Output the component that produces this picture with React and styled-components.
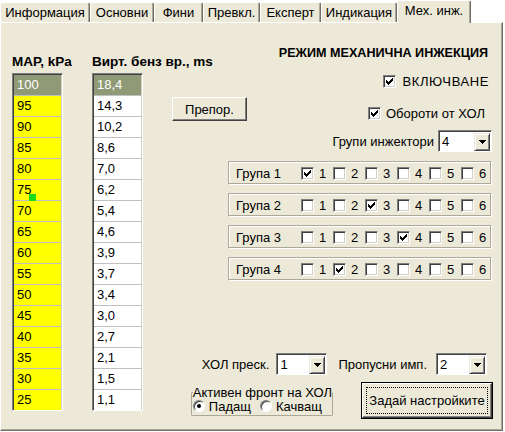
import React from "react"
import styled, { createGlobalStyle } from "styled-components"

const GlobalStyle = createGlobalStyle`
  html, body {
    margin: 0;
    padding: 0;
    background: #fff;
  }
  body {
    font-family: "Liberation Sans", Arial, sans-serif;
    font-size: 13px;
    color: #000;
  }
`

const TABS = [
  { label: "Информация", w: 90 },
  { label: "Основни", w: 64 },
  { label: "Фини", w: 49 },
  { label: "Превкл.", w: 57 },
  { label: "Експерт", w: 61 },
  { label: "Индикация", w: 76 },
  { label: "Мех. инж.", w: 74, active: true },
]

const MAP = [100, 95, 90, 85, 80, 75, 70, 65, 60, 55, 50, 45, 40, 35, 30, 25]
const VIRT = ["18,4", "14,3", "10,2", "8,6", "7,0", "6,2", "5,4", "4,6", "3,9", "3,7", "3,4", "3,0", "2,7", "2,1", "1,5", "1,1"]
const GROUPS = [1, 3, 4, 2]

const Window = styled.div`
  width: 505px;
  height: 432px;
  overflow: hidden;
  background: #fff;
`

const TabStrip = styled.div`
  position: relative;
  z-index: 1;
  display: flex;
  align-items: flex-end;
  height: 22px;
`

const Tab = styled.div`
  box-sizing: border-box;
  width: ${p => p.$w}px;
  height: ${p => (p.$active ? 23 : 20)}px;
  margin-bottom: ${p => (p.$active ? -1 : 0)}px;
  padding-bottom: ${p => (p.$active ? 3 : 0)}px;
  display: flex;
  align-items: center;
  justify-content: center;
  white-space: nowrap;
  background: #ece9d8;
  border-top: 1px solid #fff;
  border-left: 1px solid #fff;
  border-right: 1px solid #716f64;
  border-radius: 2px 2px 0 0;
  box-shadow: inset -1px 0 0 #aca899;
`

const Panel = styled.div`
  box-sizing: border-box;
  width: 503px;
  height: 409px;
  display: flex;
  align-items: flex-start;
  padding: 0 10px 0 11px;
  background: #ece9d8;
  border-top: 1px solid #fff;
  border-left: 1px solid #fff;
  border-right: 1px solid #716f64;
  border-bottom: 1px solid #716f64;
  box-shadow: inset -1px -1px 0 #aca899;
`

const Tables = styled.div`
  display: flex;
  gap: 29px;
  margin-top: 32px;
`

const Column = styled.div`
  display: flex;
  flex-direction: column;
  width: 51px;
`

const Header = styled.div`
  height: 14px;
  line-height: 14px;
  margin-bottom: 4px;
  font-weight: bold;
  font-size: 13.5px;
  white-space: nowrap;
`

const Grid = styled.div`
  position: relative;
  box-sizing: border-box;
  width: 51px;
  padding: 1px 0 0 1px;
  background: #404040;
  border: 1px solid;
  border-color: #808080 #fff #fff #808080;
`

const Cell = styled.div`
  height: 20px;
  line-height: 20px;
  padding-left: 3px;
  background: ${p => (p.$selected ? "#919a76" : p.$bg)};
  color: ${p => (p.$selected ? "#fff" : "#000")};
  border-right: 1px solid #d4d0c8;

  & + & {
    border-top: 1px solid #c0c0c0;
  }
`

const Marker = styled.div`
  position: absolute;
  left: 16px;
  top: 120px;
  width: 7px;
  height: 7px;
  background: #1bdc1b;
`

const Right = styled.div`
  flex: 1;
  display: flex;
  flex-direction: column;
  margin-top: 23px;
`

const Title = styled.div`
  align-self: flex-end;
  margin-right: 4px;
  height: 14px;
  line-height: 14px;
  font-weight: bold;
  font-size: 12.6px;
  white-space: nowrap;
`

const CheckLabel = styled.label`
  display: flex;
  align-items: center;
  gap: ${p => p.$gap || 5}px;
  height: 13px;
  line-height: 13px;
  white-space: nowrap;
  letter-spacing: ${p => p.$track || 0}px;
`

const Box = styled.span`
  box-sizing: border-box;
  display: block;
  flex: none;
  width: 13px;
  height: 13px;
  background: #fff;
  border: 1px solid;
  border-color: #808080 #fff #fff #808080;
  box-shadow: inset 1px 1px 0 #404040, inset -1px -1px 0 #d4d0c8;

  svg {
    display: block;
  }
`

const TopCheck = styled.div`
  align-self: flex-end;
  margin: 15px 3px 0 0;
`

const MiddleRow = styled.div`
  display: flex;
  justify-content: space-between;
  align-items: flex-start;
  margin-top: 9px;
`

const Button = styled.button`
  box-sizing: border-box;
  width: ${p => p.$w}px;
  height: ${p => p.$h}px;
  margin: 0 0 0 ${p => p.$left || 0}px;
  padding: 0;
  display: flex;
  align-items: center;
  justify-content: center;
  font: inherit;
  color: #000;
  background: #ece9d8;
  border: 1px solid;
  border-color: #fff #404040 #404040 #fff;
  box-shadow: inset -1px -1px 0 #808080;
  outline: ${p => (p.$default ? "1px solid #000" : "none")};
  outline-offset: 0;
`

const Focus = styled.span`
  box-sizing: border-box;
  display: flex;
  align-items: center;
  justify-content: center;
  width: calc(100% - 6px);
  height: calc(100% - 6px);
  border: 1px dotted #000;
`

const SideCheck = styled.div`
  margin: 10px 7px 0 0;
`

const LabeledRow = styled.div`
  align-self: flex-end;
  display: flex;
  align-items: center;
  margin: ${p => p.$m};
  white-space: nowrap;
`

const Gap = styled.span`
  margin-left: ${p => p.$w}px;
`

const Combo = styled.div`
  box-sizing: border-box;
  width: ${p => p.$w}px;
  height: 22px;
  margin-left: ${p => p.$gap}px;
  display: flex;
  align-items: center;
  padding: 1px 1px 0 1px;
  background: #fff;
  border: 1px solid;
  border-color: #808080 #fff #fff #808080;
  box-shadow: inset 1px 1px 0 #404040;
`

const ComboText = styled.span`
  flex: 1;
  padding-left: 2px;
`

const DropButton = styled.span`
  box-sizing: border-box;
  width: 16px;
  height: 18px;
  display: flex;
  align-items: center;
  justify-content: center;
  background: #ece9d8;
  border: 1px solid;
  border-color: #ece9d8 #404040 #404040 #ece9d8;
  box-shadow: inset 1px 1px 0 #fff, inset -1px -1px 0 #808080;
`

const GroupList = styled.div`
  align-self: flex-end;
  display: flex;
  flex-direction: column;
  gap: 8px;
  margin-top: 9px;
`

const GroupBox = styled.div`
  box-sizing: border-box;
  width: 264px;
  height: 24px;
  display: grid;
  grid-template-columns: 65px repeat(5, 32px) auto;
  align-items: center;
  padding-left: 7px;
  border: 1px solid;
  border-color: #aca899 #fff #fff #aca899;
  box-shadow: inset -1px -1px 0 #aca899, inset 1px 1px 0 #fff;
`

const Inj = styled.label`
  display: flex;
  align-items: center;
  gap: 5px;
`

const BottomRow = styled.div`
  align-self: flex-end;
  display: flex;
  align-items: center;
  gap: 29px;
  margin-top: 8px;
`

const Frame = styled.fieldset`
  box-sizing: border-box;
  width: 137px;
  margin: 0;
  padding: 0 0 2px 1px;
  border: 1px solid #aca899;
  border-radius: 1px;

  legend {
    padding: 0;
    margin-left: 0;
    line-height: 13px;
    white-space: nowrap;
  }
`

const RadioRow = styled.div`
  display: flex;
  align-items: center;
  height: 13px;
  margin-top: 1px;
`

const RadioItem = styled.label`
  display: flex;
  align-items: center;
  gap: 4px;
  margin-right: 9px;
  white-space: nowrap;
`

const Radio = styled.span`
  box-sizing: border-box;
  display: flex;
  align-items: center;
  justify-content: center;
  width: 12px;
  height: 12px;
  border-radius: 50%;
  background: #fff;
  border: 1px solid;
  border-color: #808080 #fff #fff #808080;
  box-shadow: inset 1px 1px 0 #404040;

  &::after {
    content: "";
    width: 4px;
    height: 4px;
    border-radius: 50%;
    background: ${p => (p.$on ? "#000" : "transparent")};
  }
`

const Tick = () => (
  <svg width="11" height="11" viewBox="0 0 11 11" shapeRendering="crispEdges">
    {[4, 5, 6, 5, 4, 3, 2].map((top, i) => (
      <rect key={i} x={2 + i} y={top} width="1" height="3" fill="#000" />
    ))}
  </svg>
)

const Arrow = () => (
  <svg width="7" height="4" viewBox="0 0 7 4" shapeRendering="crispEdges">
    <rect x="0" y="0" width="7" height="1" fill="#000" />
    <rect x="1" y="1" width="5" height="1" fill="#000" />
    <rect x="2" y="2" width="3" height="1" fill="#000" />
    <rect x="3" y="3" width="1" height="1" fill="#000" />
  </svg>
)

const CheckBox = ({ checked }) => <Box>{checked && <Tick />}</Box>

const Select = ({ value, w, gap }) => (
  <Combo $w={w} $gap={gap}>
    <ComboText>{value}</ComboText>
    <DropButton>
      <Arrow />
    </DropButton>
  </Combo>
)

export default function App() {
  return (
    <Window>
      <GlobalStyle />
      <TabStrip>
        {TABS.map(t => (
          <Tab key={t.label} $w={t.w} $active={t.active}>
            {t.label}
          </Tab>
        ))}
      </TabStrip>

      <Panel>
        <Tables>
          <Column>
            <Header>MAP, kPa</Header>
            <Grid>
              {MAP.map((v, i) => (
                <Cell key={v} $bg="#ffff00" $selected={i === 0}>
                  {v}
                </Cell>
              ))}
              <Marker />
            </Grid>
          </Column>
          <Column>
            <Header>Вирт. бенз вр., ms</Header>
            <Grid>
              {VIRT.map((v, i) => (
                <Cell key={i} $bg="#fff" $selected={i === 0}>
                  {v}
                </Cell>
              ))}
            </Grid>
          </Column>
        </Tables>

        <Right>
          <Title>РЕЖИМ МЕХАНИЧНА ИНЖЕКЦИЯ</Title>
          <TopCheck>
            <CheckLabel $gap={6} $track={0.6}>
              <CheckBox checked />
              ВКЛЮЧВАНЕ
            </CheckLabel>
          </TopCheck>

          <MiddleRow>
            <Button $w={75} $h={24} $left={29}>
              Препор.
            </Button>
            <SideCheck>
              <CheckLabel>
                <CheckBox checked />
                Обороти от ХОЛ
              </CheckLabel>
            </SideCheck>
          </MiddleRow>

          <LabeledRow $m="9px 0 0 0">
            Групи инжектори
            <Select value="4" w={54} gap={4} />
          </LabeledRow>

          <GroupList>
            {GROUPS.map((on, g) => (
              <GroupBox key={g}>
                <span>Група {g + 1}</span>
                {[1, 2, 3, 4, 5, 6].map(n => (
                  <Inj key={n}>
                    <CheckBox checked={n === on} />
                    {n}
                  </Inj>
                ))}
              </GroupBox>
            ))}
          </GroupList>

          <LabeledRow $m="72px 5px 0 0">
            ХОЛ преск.
            <Select value="1" w={51} gap={7} />
            <Gap $w={11}>Пропусни имп.</Gap>
            <Select value="2" w={51} gap={9} />
          </LabeledRow>

          <BottomRow>
            <Frame>
              <legend>Активен фронт на ХОЛ</legend>
              <RadioRow>
                <RadioItem>
                  <Radio $on />
                  Падащ
                </RadioItem>
                <RadioItem>
                  <Radio />
                  Качващ
                </RadioItem>
              </RadioRow>
            </Frame>
            <Button $w={130} $h={35} $default>
              <Focus>Задай настройките</Focus>
            </Button>
          </BottomRow>
        </Right>
      </Panel>
    </Window>
  )
}
